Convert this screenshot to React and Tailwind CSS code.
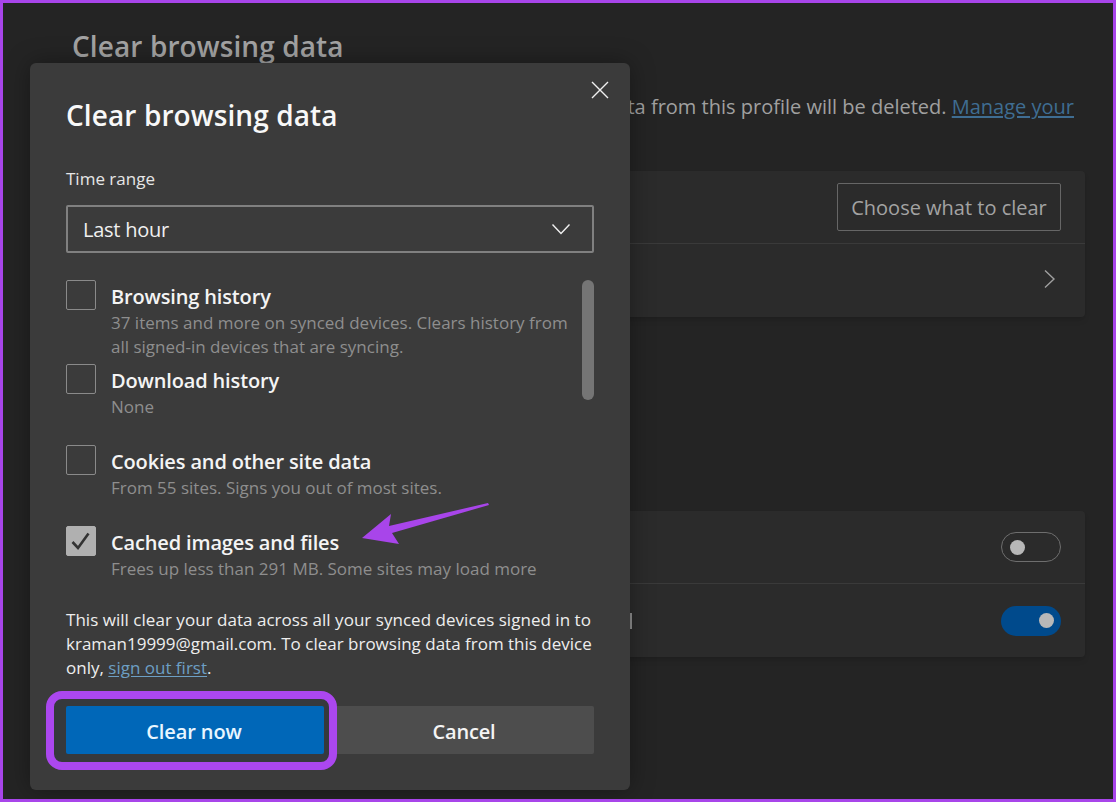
import React from "react";

function Item({ checked, title, desc, className }) {
  return (
    <div className={"flex gap-[15px] " + className}>
      <div className={"w-[30px] h-[30px] shrink-0 rounded-[2px] border flex items-center justify-center " + (checked ? "bg-[#b0b0b0] border-[#b0b0b0]" : "border-[#8a8a8a]")}>
        {checked && (
          <svg width="20" height="20" viewBox="0 0 20 20" fill="none" stroke="#333333" strokeWidth="2.6">
            <path d="M1.5 11 L7 17 L17.5 2.5" />
          </svg>
        )}
      </div>
      <div className="w-[468px]">
        <div className="pt-[1px] text-[20px] leading-[32px] font-semibold tracking-[-0.15px] text-[#f4f4f4]">{title}</div>
        <div className="-mt-[2px] text-[17px] leading-[24px] text-[#8e8e8e] whitespace-pre-line">{desc}</div>
      </div>
    </div>
  );
}

function Row({ children, className }) {
  return <div className={"flex items-center justify-end pr-[24px] " + className}>{children}</div>;
}

export default function App() {
  return (
    <div className="relative w-[1116px] h-[802px] overflow-hidden border-[3px] border-[#a845ea] bg-[#242424] font-['Open_Sans','Noto_Sans',sans-serif]">
      <div className="pl-[69px] pt-[25px] w-[1082px]">
        <h1 className="text-[28px] leading-[36px] font-semibold tracking-[0.1px] text-[#a3a3a3]">Clear browsing data</h1>
        <p className="mt-[31px] pr-[11px] text-right whitespace-nowrap text-[20px] leading-[24px] text-[#a0a0a0]">
          Only data from this profile will be deleted.{" "}
          <span className="text-[#3f6d92] underline underline-offset-2">Manage your</span>
        </p>
        <section className="mt-[52px] w-[1013px] rounded-[4px] bg-[#2b2b2b] shadow-md">
          <Row className="h-[73px] border-b border-[#3a3a3a]">
            <div className="w-[224px] h-[48px] pt-[1px] flex items-center justify-center rounded-[2px] border border-[#666666] text-[20px] text-[#a3a3a3]">
              Choose what to clear
            </div>
          </Row>
          <Row className="h-[73px]">
            <svg width="14" height="20" viewBox="0 0 14 20" fill="none" stroke="#a0a0a0" strokeWidth="1.4" className="mr-[4px] -mt-[3px]">
              <path d="M2 1.5 L11 10 L2 18.5" />
            </svg>
          </Row>
        </section>
        <section className="mt-[194px] w-[1013px] rounded-[4px] bg-[#2b2b2b] shadow-md">
          <Row className="h-[73px] border-b border-[#3a3a3a]">
            <div className="w-[60px] h-[30px] rounded-full border border-[#6e6e6e] flex items-center pl-[8px]">
              <div className="w-[15px] h-[15px] rounded-full bg-[#b8b8b8]" />
            </div>
          </Row>
          <div className="h-[73px] flex items-center justify-between pl-[558px] pr-[24px]">
            <div className="w-[2px] h-[16px] bg-[#8f8f8f]" />
            <div className="w-[60px] h-[30px] rounded-full bg-[#004a8c] flex items-center justify-end pr-[7px]">
              <div className="w-[15px] h-[15px] rounded-full bg-[#b8b8b8]" />
            </div>
          </div>
        </section>
      </div>

      <div className="absolute left-[27px] top-[60px] w-[600px] h-[727px] rounded-[6px] bg-[#3b3b3b] px-[36px] shadow-[0_0_24px_rgba(0,0,0,0.35)]">
        <button className="absolute right-[21px] top-[18px]">
          <svg width="18" height="18" viewBox="0 0 18 18" fill="none" stroke="#f0f0f0" strokeWidth="1.4">
            <path d="M1 1 L17 17 M17 1 L1 17" />
          </svg>
        </button>
        <h2 className="pt-[33px] text-[28px] leading-[38px] font-semibold tracking-[0.1px] text-[#f8f8f8]">Clear browsing data</h2>
        <div className="mt-[33px] text-[17px] leading-[24px] text-[#e6e6e6]">Time range</div>
        <div className="mt-[14px] h-[48px] rounded-[2px] border-2 border-[#808080] flex items-center justify-between pl-[15px] pr-[21px] text-[20px] tracking-[-0.25px] text-[#f0f0f0]">
          <span className="pt-[2px]">Last hour</span>
          <svg width="20" height="12" viewBox="0 0 20 12" fill="none" stroke="#f0f0f0" strokeWidth="1.4">
            <path d="M1.5 1.5 L10 10.5 L18.5 1.5" />
          </svg>
        </div>
        <div className="relative mt-[27px] h-[299px]">
          <div className="absolute right-0 top-0 w-[12px] h-[120px] rounded-full bg-[#757575]" />
          <Item title="Browsing history" desc={"37 items and more on synced devices. Clears history from\nall signed-in devices that are syncing."} />
          <Item className="mt-[5px]" title="Download history" desc="None" />
          <Item className="mt-[26px]" title="Cookies and other site data" desc="From 55 sites. Signs you out of most sites." />
          <Item className="mt-[26px]" checked title="Cached images and files" desc="Frees up less than 291 MB. Some sites may load more" />
        </div>
        <p className="mt-[29px] whitespace-nowrap text-[17px] leading-[24px] text-[#eeeeee]">
          <span className="tracking-[0.03px]">This will clear your data across all your synced devices signed in to</span>
          <br />
          kraman19999@gmail.com. To clear browsing data from this device
          <br />
          only, <span className="text-[#6d9fc4] underline underline-offset-2">sign out first</span>.
        </p>
        <div className="mt-[26px] flex gap-[10px]">
          <button className="relative z-10 w-[258px] h-[48px] pt-[3px] pr-[2px] rounded-[2px] bg-[#0067b8] text-[20px] font-semibold tracking-[-0.1px] text-[#e8f6ff]">Clear now</button>
          <button className="w-[260px] h-[48px] pt-[3px] rounded-[2px] bg-[#4d4d4d] text-[20px] font-semibold tracking-[-0.2px] text-[#f4f4f4]">Cancel</button>
        </div>
        <div className="absolute left-[16px] top-[628px] w-[291px] h-[79px] rounded-[16px] border-[8px] border-[#ab47ef] bg-[#36393c]" />
      </div>

      <svg className="absolute left-[354px] top-[494px]" width="135" height="50" viewBox="357 497 135 50">
        <polygon points="362,538 391,514 389,526 488,503 489,505 392,533 399,544" fill="#a845ea" />
      </svg>
    </div>
  );
}
